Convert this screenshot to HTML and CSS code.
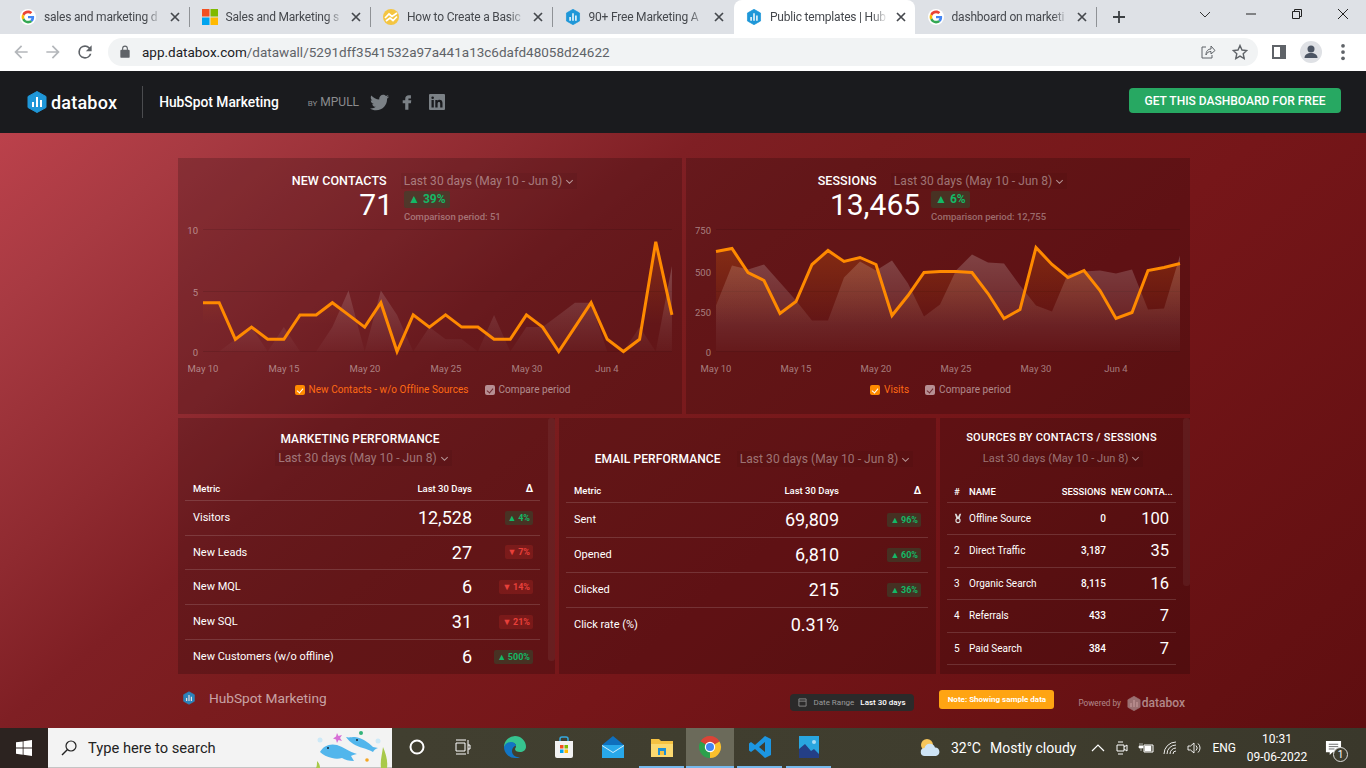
FILE: index.html
```html
<!DOCTYPE html>
<html lang="en">

<head>
    <meta charset="UTF-8">
    <meta name="viewport" content="width=device-width, initial-scale=1.0">
    <title>Public templates | HubSpot Marketing</title>
    <link rel="stylesheet" href="styles.css">
</head>

<body>
    <svg class="defs" width="0" height="0">
        <defs>
            <symbol id="dbx" viewBox="0 0 20 22">
                <path d="M10 .5l9 5v11l-9 5-9-5v-11z" fill="#1f97d8" stroke="#1f97d8" stroke-linejoin="round"/>
                <path d="M5 11h2v5H5zM9 6h2v10H9zM13 9h2v7h-2z" fill="#fff"/>
            </symbol>
            <symbol id="gg" viewBox="-6 -6 60 60">
                <circle cx="24" cy="24" r="30" fill="#fff"/>
                <path fill="#EA4335" d="M24 9.5c3.54 0 6.71 1.22 9.21 3.6l6.85-6.85C35.9 2.38 30.47 0 24 0 14.62 0 6.51 5.38 2.56 13.22l7.98 6.19C12.43 13.72 17.74 9.5 24 9.5z"/>
                <path fill="#4285F4" d="M46.98 24.55c0-1.57-.15-3.09-.38-4.55H24v9.02h12.94c-.58 2.96-2.26 5.48-4.78 7.18l7.73 6c4.51-4.18 7.09-10.36 7.09-17.65z"/>
                <path fill="#FBBC05" d="M10.53 28.59c-.48-1.45-.76-2.99-.76-4.59s.27-3.14.76-4.59l-7.98-6.19C.92 16.46 0 20.12 0 24c0 3.88.92 7.54 2.56 10.78l7.97-6.19z"/>
                <path fill="#34A853" d="M24 48c6.48 0 11.93-2.13 15.89-5.81l-7.73-6c-2.15 1.45-4.92 2.3-8.16 2.3-6.26 0-11.57-4.22-13.47-9.91l-7.98 6.19C6.51 42.62 14.62 48 24 48z"/>
            </symbol>
            <symbol id="closex" viewBox="0 0 10 10">
                <path d="M1 1l8 8M9 1l-8 8" stroke="#45484d" stroke-width="1.7" fill="none"/>
            </symbol>
            <!-- the plots are drawn in a flipped group, so these run bottom to top -->
            <linearGradient id="cmpFill" x1="0" y1="1" x2="0" y2="0">
                <stop offset="0" stop-color="#fff" stop-opacity=".2"/>
                <stop offset="1" stop-color="#fff" stop-opacity=".02"/>
            </linearGradient>
            <linearGradient id="lineFill" x1="0" y1="1" x2="0" y2="0">
                <stop offset="0" stop-color="#ff7a00" stop-opacity=".22"/>
                <stop offset=".75" stop-color="#ff7a00" stop-opacity="0"/>
            </linearGradient>
        </defs>
    </svg>

    <!-- chrome tabs -->
    <div class="tabstrip">
        <div class="tab">
            <svg class="fav" viewBox="0 0 16 16"><use href="#gg"/></svg>
            <span class="tab-title">sales and marketing d</span>
            <svg class="tab-x"><use href="#closex"/></svg>
        </div>
        <i class="tab-sep"></i>
        <div class="tab">
            <svg class="fav" viewBox="0 0 16 16">
                <path d="M0 0h7.5v7.5H0z" fill="#f25022"/><path d="M8.5 0H16v7.5H8.5z" fill="#7fba00"/>
                <path d="M0 8.5h7.5V16H0z" fill="#00a4ef"/><path d="M8.5 8.5H16V16H8.5z" fill="#ffb900"/>
            </svg>
            <span class="tab-title">Sales and Marketing s</span>
            <svg class="tab-x"><use href="#closex"/></svg>
        </div>
        <i class="tab-sep"></i>
        <div class="tab">
            <svg class="fav" viewBox="0 0 16 16">
                <circle cx="8" cy="8" r="8" fill="#f4c542"/>
                <path d="M2 9l4-4 3 2.5L14 4M3 12l4-3 3 2.5 4-4" stroke="#fff" stroke-width="1.7" fill="none"/>
            </svg>
            <span class="tab-title">How to Create a Basic</span>
            <svg class="tab-x"><use href="#closex"/></svg>
        </div>
        <i class="tab-sep"></i>
        <div class="tab">
            <svg class="fav"><use href="#dbx"/></svg>
            <span class="tab-title">90+ Free Marketing A</span>
            <svg class="tab-x"><use href="#closex"/></svg>
        </div>
        <i class="tab-sep off"></i>
        <div class="tab tab-active">
            <svg class="fav"><use href="#dbx"/></svg>
            <span class="tab-title">Public templates | Hub</span>
            <svg class="tab-x"><use href="#closex"/></svg>
        </div>
        <i class="tab-sep off"></i>
        <div class="tab">
            <svg class="fav" viewBox="0 0 16 16"><use href="#gg"/></svg>
            <span class="tab-title">dashboard on marketi</span>
            <svg class="tab-x"><use href="#closex"/></svg>
        </div>
        <i class="tab-sep"></i>
        <svg class="tab-plus" viewBox="0 0 14 14"><path d="M7 1v12M1 7h12" stroke="#3c4043" stroke-width="1.8"/></svg>
        <div class="win-ctrls">
            <svg viewBox="0 0 12 12"><path d="M1 4l5 5 5-5" stroke="#333" fill="none"/></svg>
            <svg viewBox="0 0 12 12"><path d="M1 6h10" stroke="#222"/></svg>
            <svg viewBox="0 0 12 12"><path d="M1.5 3.5h7v7h-7zM3.5 3.5v-2h7v7h-2" stroke="#222" fill="none"/></svg>
            <svg viewBox="0 0 12 12"><path d="M1 1l10 10M11 1L1 11" stroke="#222" fill="none"/></svg>
        </div>
    </div>

    <!-- address bar -->
    <div class="toolbar">
        <svg class="tool-btn" viewBox="0 0 24 24"><path d="M20 11H7.83l5.59-5.59L12 4l-8 8 8 8 1.41-1.41L7.83 13H20z" fill="#b4b7bb"/></svg>
        <svg class="tool-btn" viewBox="0 0 24 24"><path d="M4 11h12.17l-5.59-5.59L12 4l8 8-8 8-1.41-1.41L16.17 13H4z" fill="#b4b7bb"/></svg>
        <svg class="tool-btn" viewBox="0 0 24 24"><path d="M17.65 6.35A7.96 7.96 0 0 0 12 4a8 8 0 1 0 7.73 10h-2.08A6 6 0 1 1 12 6c1.66 0 3.14.69 4.22 1.78L13 11h7V4l-2.35 2.35z" fill="#5f6368"/></svg>
        <div class="omnibox">
            <svg class="lock" viewBox="0 0 24 24"><path d="M18 8h-1V6a5 5 0 0 0-10 0v2H6a2 2 0 0 0-2 2v10a2 2 0 0 0 2 2h12a2 2 0 0 0 2-2V10a2 2 0 0 0-2-2zm-2.9 0H8.900V6a3.100 3.100 0 0 1 6.200 0v2z" fill="#5f6368"/></svg>
            <span class="url"><b>app.databox.com</b>/datawall/5291dff3541532a97a441a13c6dafd48058d24622</span>
            <svg class="omni-ico" viewBox="0 0 16 16"><path d="M6 3H2v11h10v-3M6 11c0-4 2-6 5-6V2l4 4.500L11 10V7.500C8.500 7.500 7 8.500 6 11z" stroke="#5f6368" fill="none"/></svg>
            <svg class="omni-ico star" viewBox="0 0 16 16"><path d="M8 1.500l2 4.500 4.800.5-3.600 3.200 1 4.800L8 12.100l-4.200 2.400 1-4.800L1.200 6.500 6 6z" stroke="#5f6368" stroke-width="1.400" fill="none"/></svg>
        </div>
        <svg class="tool-btn side-btn" viewBox="0 0 16 16"><path d="M2 2h12v12H2z" fill="none" stroke="#5f6368" stroke-width="2"/><path d="M9 2h5v12H9z" fill="#5f6368"/></svg>
        <svg class="tool-btn avatar" viewBox="0 0 22 22"><circle cx="11" cy="11" r="11" fill="#dfe1e5"/><circle cx="11" cy="8" r="3.500" fill="#4c5563"/><path d="M4.500 17c0-3.500 3-5 6.500-5s6.500 1.500 6.500 5z" fill="#4c5563"/></svg>
        <svg class="tool-btn" viewBox="0 0 16 16"><circle cx="8" cy="3" r="1.500" fill="#5f6368"/><circle cx="8" cy="8" r="1.500" fill="#5f6368"/><circle cx="8" cy="13" r="1.500" fill="#5f6368"/></svg>
    </div>

    <!-- databox header -->
    <header class="app-head">
        <svg class="head-logo"><use href="#dbx"/></svg>
        <span class="wordmark">databox</span>
        <i class="head-div"></i>
        <span class="head-title">HubSpot Marketing</span>
        <span class="head-by"><small>BY</small> MPULL</span>
        <svg class="soc soc-tw" viewBox="0 0 24 24"><path d="M23.954 4.569c-.885.389-1.83.654-2.825.775 1.014-.611 1.794-1.574 2.163-2.723-.951.555-2.005.959-3.127 1.184-.896-.959-2.173-1.559-3.591-1.559-2.717 0-4.92 2.203-4.92 4.917 0 .39.045.765.127 1.124C7.691 8.094 4.066 6.13 1.64 3.161c-.427.722-.666 1.561-.666 2.475 0 1.71.87 3.213 2.188 4.096-.807-.026-1.566-.248-2.228-.616v.061c0 2.385 1.693 4.374 3.946 4.827-.413.111-.849.171-1.296.171-.314 0-.615-.03-.916-.086.631 1.953 2.445 3.377 4.604 3.417-1.68 1.319-3.809 2.105-6.102 2.105-.39 0-.779-.023-1.17-.067 2.189 1.394 4.768 2.209 7.557 2.209 9.054 0 13.999-7.496 13.999-13.986 0-.209 0-.42-.015-.63.961-.689 1.8-1.56 2.46-2.548l-.047-.02z"/></svg>
        <svg class="soc soc-fb" viewBox="0 3.500 14 21"><path d="M9 8.500h3.500V4H9.500C6.500 4 4.500 6 4.500 9v2H1v4h3.500v9h4.500v-9h3.500l.5-4H9V9.500c0-.6.200-1 0-1z"/></svg>
        <svg class="soc soc-in" viewBox="0 0 16 16"><path d="M1 0h14a1 1 0 0 1 1 1v14a1 1 0 0 1-1 1H1a1 1 0 0 1-1-1V1a1 1 0 0 1 1-1zm1.500 6v7.500h2.300V6zm1.150-3.500a1.300 1.300 0 1 0 0 2.600 1.300 1.300 0 0 0 0-2.600zM6.300 6v7.500h2.300V9.600c0-1 .500-1.700 1.400-1.700s1.200.7 1.200 1.700v3.900h2.300V9.100c0-2.100-1.100-3.300-2.900-3.300-1 0-1.700.5-2 1.100V6z" fill-rule="evenodd"/></svg>
        <a class="cta">GET THIS DASHBOARD FOR FREE</a>
    </header>

    <main class="wall">
        <div class="dash">
            <div class="dash-row">
                <section class="card">
                    <div class="chart-top">
                        <h3>NEW CONTACTS</h3>
                        <span class="range">Last 30 days (May 10 - Jun 8) <i class="chev"></i></span>
                    </div>
                    <div class="chart-kpi">
                        <span class="kpi-num">71</span>
                        <div class="kpi-side">
                            <span class="kpi-delta">▲ 39%</span>
                            <span class="kpi-cmp">Comparison period: 51</span>
                        </div>
                    </div>
                    <svg class="plot" viewBox="0 0 504 158">
                        <g class="grid">
                            <line x1="25" x2="494" y1="7.500" y2="7.500"/>
                            <line x1="25" x2="494" y1="69.500" y2="69.500"/>
                            <line x1="25" x2="494" y1="129.500" y2="129.500"/>
                        </g>
                        <g class="ylab">
                            <text x="20" y="12">10</text>
                            <text x="20" y="74">5</text>
                            <text x="20" y="134">0</text>
                        </g>
                        <g class="xlab">
                            <text x="25" y="150">May 10</text>
                            <text x="106" y="150">May 15</text>
                            <text x="187" y="150">May 20</text>
                            <text x="268" y="150">May 25</text>
                            <text x="349" y="150">May 30</text>
                            <text x="429" y="150">Jun 4</text>
                        </g>
                        <g transform="translate(25 129.500) scale(16.170 -12.200)">
                            <polygon fill="url(#cmpFill)" points="0,0 1,0 2,1 3,2 4,0 5,2 6,0 7,0 8,2 9,5 10,0 11,5 12,3 13,0 14,2 15,1 16,1 17,0 18,3 19,0 20,2 21,2 22,3 23,4 24,4 25,0 26,0 27,2 28,0 29,7 29,0"/>
                            <polygon fill="url(#lineFill)" points="0,0 0,4 1,4 2,1 3,2 4,1 5,1 6,3 7,3 8,4 9,3 10,2 11,4 12,0 13,3 14,2 15,3 16,2 17,2 18,1 19,1 20,3 21,2 22,0 23,2 24,4 25,1 26,0 27,1 28,9 29,3 29,0"/>
                            <polyline class="line" points="0,4 1,4 2,1 3,2 4,1 5,1 6,3 7,3 8,4 9,3 10,2 11,4 12,0 13,3 14,2 15,3 16,2 17,2 18,1 19,1 20,3 21,2 22,0 23,2 24,4 25,1 26,0 27,1 28,9 29,3"/>
                        </g>
                    </svg>
                    <div class="legend">
                        <span class="leg leg-on"><i class="tick"></i>New Contacts - w/o Offline Sources</span>
                        <span class="leg"><i class="tick"></i>Compare period</span>
                    </div>
                </section>

                <section class="card">
                    <div class="chart-top">
                        <h3>SESSIONS</h3>
                        <span class="range">Last 30 days (May 10 - Jun 8) <i class="chev"></i></span>
                    </div>
                    <div class="chart-kpi">
                        <span class="kpi-num">13,465</span>
                        <div class="kpi-side">
                            <span class="kpi-delta">▲ 6%</span>
                            <span class="kpi-cmp">Comparison period: 12,755</span>
                        </div>
                    </div>
                    <svg class="plot" viewBox="0 0 504 158">
                        <g class="grid">
                            <line x1="30" x2="494" y1="7.500" y2="7.500"/>
                            <line x1="30" x2="494" y1="69.500" y2="69.500"/>
                            <line x1="30" x2="494" y1="129.500" y2="129.500"/>
                        </g>
                        <g class="ylab">
                            <text x="25" y="12">750</text>
                            <text x="25" y="54">500</text>
                            <text x="25" y="94">250</text>
                            <text x="25" y="134">0</text>
                        </g>
                        <g class="xlab">
                            <text x="30" y="150">May 10</text>
                            <text x="110" y="150">May 15</text>
                            <text x="190" y="150">May 20</text>
                            <text x="270" y="150">May 25</text>
                            <text x="350" y="150">May 30</text>
                            <text x="430" y="150">Jun 4</text>
                        </g>
                        <g transform="translate(30 129.500) scale(16 -1)">
                            <polygon fill="url(#cmpFill)" points="0,0 0,46 1,86 2,82 3,87 4,69 5,51 6,31 7,31 8,74 9,90 10,81 11,91 12,68 13,35 14,47 15,81 16,97 17,89 18,88 19,66 20,46 21,40 22,78 23,80 24,81 25,78 26,82 27,42 28,43 29,96 29,0"/>
                            <polygon fill="url(#lineFill)" points="0,0 0,100 1,103 2,79 3,71 4,38 5,50 6,87 7,101 8,90 9,94 10,87 11,36 12,56 13,79 14,80 15,80 16,79 17,58 18,33 19,42 20,104 21,87 22,74 23,81 24,61 25,33 26,39 27,81 28,84 29,88 29,0"/>
                            <polyline class="line" points="0,100 1,103 2,79 3,71 4,38 5,50 6,87 7,101 8,90 9,94 10,87 11,36 12,56 13,79 14,80 15,80 16,79 17,58 18,33 19,42 20,104 21,87 22,74 23,81 24,61 25,33 26,39 27,81 28,84 29,88"/>
                        </g>
                    </svg>
                    <div class="legend">
                        <span class="leg leg-on"><i class="tick"></i>Visits</span>
                        <span class="leg"><i class="tick"></i>Compare period</span>
                    </div>
                </section>
            </div>

            <div class="dash-row dash-row-b">
                <section class="card card-mkt">
                    <h3>MARKETING PERFORMANCE</h3>
                    <span class="range">Last 30 days (May 10 - Jun 8) <i class="chev"></i></span>
                    <table class="metrics">
                        <tr><th>Metric</th><th class="num">Last 30 Days</th><th class="delta">Δ</th></tr>
                        <tr><td>Visitors</td><td class="num">12,528</td><td class="delta"><span class="up">▲ 4%</span></td></tr>
                        <tr class="short"><td>New Leads</td><td class="num">27</td><td class="delta"><span class="down">▼ 7%</span></td></tr>
                        <tr><td>New MQL</td><td class="num">6</td><td class="delta"><span class="down">▼ 14%</span></td></tr>
                        <tr><td>New SQL</td><td class="num">31</td><td class="delta"><span class="down">▼ 21%</span></td></tr>
                        <tr><td>New Customers (w/o offline)</td><td class="num">6</td><td class="delta"><span class="up">▲ 500%</span></td></tr>
                    </table>
                    <i class="scroll-thumb scroll-mkt"></i>
                </section>

                <section class="card card-email">
                    <div class="email-top">
                        <h3>EMAIL PERFORMANCE</h3>
                        <span class="range">Last 30 days (May 10 - Jun 8) <i class="chev"></i></span>
                    </div>
                    <table class="metrics">
                        <tr><th>Metric</th><th class="num">Last 30 Days</th><th class="delta">Δ</th></tr>
                        <tr><td>Sent</td><td class="num">69,809</td><td class="delta"><span class="up">▲ 96%</span></td></tr>
                        <tr><td>Opened</td><td class="num">6,810</td><td class="delta"><span class="up">▲ 60%</span></td></tr>
                        <tr><td>Clicked</td><td class="num">215</td><td class="delta"><span class="up">▲ 36%</span></td></tr>
                        <tr><td>Click rate (%)</td><td class="num">0.31%</td><td class="delta"></td></tr>
                    </table>
                </section>

                <section class="card card-src">
                    <h3>SOURCES BY CONTACTS / SESSIONS</h3>
                    <span class="range">Last 30 days (May 10 - Jun 8) <i class="chev"></i></span>
                    <table class="sources">
                        <tr><th class="rank">#</th><th>NAME</th><th class="sess">SESSIONS</th><th class="newc"><span class="clip">NEW CONTA...</span></th></tr>
                        <tr>
                            <td class="rank">
                                <svg class="medal" viewBox="0 0 10 12"><path d="M1 0h2l2 4 2-4h2L7 6H3z" fill="#ddd"/><circle cx="5" cy="8.500" r="2.600" fill="none" stroke="#ddd" stroke-width="1.400"/></svg>
                            </td>
                            <td>Offline Source</td><td class="sess">0</td><td class="newc">100</td>
                        </tr>
                        <tr><td class="rank">2</td><td>Direct Traffic</td><td class="sess">3,187</td><td class="newc">35</td></tr>
                        <tr><td class="rank">3</td><td>Organic Search</td><td class="sess">8,115</td><td class="newc">16</td></tr>
                        <tr><td class="rank">4</td><td>Referrals</td><td class="sess">433</td><td class="newc">7</td></tr>
                        <tr><td class="rank">5</td><td>Paid Search</td><td class="sess">384</td><td class="newc">7</td></tr>
                    </table>
                    <i class="scroll-thumb scroll-src"></i>
                </section>
            </div>

            <footer class="dash-foot">
                <svg class="foot-logo"><use href="#dbx"/></svg>
                <span class="foot-title">HubSpot Marketing</span>
                <span class="foot-range">
                    <svg viewBox="0 0 10 10"><path d="M1 1h8v8H1z" fill="none" stroke="#8d8d8d"/><path d="M1 3.500h8" stroke="#8d8d8d"/></svg>
                    <em>Date Range</em> <b>Last 30 days</b>
                </span>
                <span class="foot-note">Note: Showing sample data</span>
                <span class="foot-power">Powered by</span>
                <svg class="foot-mark"><use href="#dbx"/></svg>
                <span class="foot-brand">databox</span>
            </footer>
        </div>
    </main>

    <!-- windows taskbar -->
    <div class="taskbar">
        <div class="start">
            <svg viewBox="0 0 16 16"><path d="M0 2.300l6.700-.9v6.200H0zM7.500 1.300L16 0v7.600H7.500zM0 8.400h6.700v6.300L0 13.700zM7.500 8.400H16V16l-8.500-1.200z" fill="#fff"/></svg>
        </div>
        <div class="search">
            <svg class="search-ico" viewBox="0 0 16 16"><circle cx="10" cy="6" r="5" fill="none" stroke="#222" stroke-width="1.200"/><path d="M6.500 9.500L1 15" stroke="#222" stroke-width="1.400"/></svg>
            <span>Type here to search</span>
            <svg class="doodle" viewBox="0 0 74 40">
                <path d="M1 40c1-2 1-4 1-7 2 2 3 4 3 7zM66 40c-1-7 1-13 2-21 3 7 5 14 4 21z" fill="#a8c94a"/>
                <path d="M5 24c3-6 10-9 17-7 7 2 12 7 20 9-3 1-5 1-6 2l3 5c-5 0-9-1-12-3-3 1-7 1-10 0-5-1-9-3-12-6z" fill="#52b6ec"/>
                <path d="M31 9c3 1 5 0 9 0 7 1 13 5 18 10l5 1c-3 1-4 2-5 4-3-2-7-3-10-4-7-2-13-5-17-11z" fill="#52b6ec"/>
                <circle cx="13" cy="20" r="1" fill="#123"/><circle cx="42" cy="12" r="1" fill="#123"/>
                <path d="M22 5l1.500 3 3.500-1-2 3 2 3-3.500-1-1.500 3-1-3.500-3-1 3-2z" fill="#d76fd6"/>
                <circle cx="46" cy="5" r="2" fill="#33b37a"/><circle cx="52" cy="32" r="1.800" fill="#f5a623"/>
                <circle cx="5" cy="12" r="2.500" fill="#cde9f7"/><circle cx="63" cy="13" r="2.500" fill="#cde9f7"/>
            </svg>
        </div>
        <div class="task-app">
            <svg viewBox="0 0 16 16"><circle cx="8" cy="8" r="6.500" fill="none" stroke="#fff" stroke-width="2"/></svg>
        </div>
        <div class="task-app task-view">
            <svg viewBox="0 0 16 16"><path d="M1 1h10M1 15h10M1 4h9v8H1zM13 1v14M13 6h2v4h-2" fill="none" stroke="#fff"/></svg>
        </div>
        <div class="task-app">
            <svg class="big" viewBox="0 0 24 24">
                <path d="M12 1a11 11 0 0 1 11 11c0 3-3 5-6 5s-5-1-5-3c0-1 1-1 1-3S11 7 7 8c-3 1-5 4-6 4A11 11 0 0 1 12 1z" fill="#36c38f"/>
                <path d="M1 12c1-3 4-5 7-5 3 0 5 2 5 4-2 0-4 2-4 5 0 4 4 7 9 6-2 1-4 1-6 1A11 11 0 0 1 1 12z" fill="#1275c4"/>
            </svg>
        </div>
        <div class="task-app">
            <svg class="big" viewBox="0 0 24 24">
                <path d="M8 6V4a2 2 0 0 1 2-2h4a2 2 0 0 1 2 2v2" fill="none" stroke="#35a9df" stroke-width="1.500"/>
                <path d="M3 6h18v15a2 2 0 0 1-2 2H5a2 2 0 0 1-2-2z" fill="#f2f2f2"/>
                <path d="M8 10h3.500v3.500H8z" fill="#f25022"/><path d="M12.500 10H16v3.500h-3.500z" fill="#7fba00"/>
                <path d="M8 14.500h3.500V18H8z" fill="#00a4ef"/><path d="M12.500 14.500H16V18h-3.500z" fill="#ffb900"/>
            </svg>
        </div>
        <div class="task-app">
            <svg class="big" viewBox="0 0 24 24">
                <path d="M12 1l11 9v13H1V10z" fill="#0f6fbd"/>
                <path d="M1 10h22v13H1z" fill="#28a8ea"/>
                <path d="M1 10l11 7 11-7v1l-11 7-11-7z" fill="#d5eefc"/>
            </svg>
        </div>
        <div class="task-app task-open">
            <svg class="big" viewBox="0 0 24 24">
                <path d="M1 4h8l2 2h12v16H1z" fill="#f5c242"/>
                <path d="M1 9h22v13H1z" fill="#fbd970"/>
                <path d="M8 13h8v7H8z" fill="#1d8fd6"/><path d="M10 16h4v4h-4z" fill="#f5c242"/>
            </svg>
        </div>
        <div class="task-app task-open task-hot">
            <svg class="big" viewBox="0 0 24 24">
                <path d="M2.470 6.500A11 11 0 0 1 21.530 6.500L12 12z" fill="#db4437"/>
                <path d="M21.530 6.500A11 11 0 0 1 12 23L12 12z" fill="#fbc02d"/>
                <path d="M12 23A11 11 0 0 1 2.470 6.500L12 12z" fill="#2ca04c"/>
                <circle cx="12" cy="12" r="5.200" fill="#fff"/><circle cx="12" cy="12" r="4" fill="#4285f4"/>
            </svg>
        </div>
        <div class="task-app task-open">
            <svg class="big" viewBox="0 0 24 24">
                <path d="M17 1l6 3v16l-6 3L7 14l-4 3-2-1.500V8.500L3 7l4 3zM17 7l-6 5 6 5z" fill="#1c96e2" fill-rule="evenodd"/>
            </svg>
        </div>
        <div class="task-app task-open">
            <svg class="big" viewBox="0 0 24 24">
                <path d="M2 1h20v22H2z" fill="#29a6e0"/>
                <path d="M2 23V14l6-5 6 7 3-2 5 5v4z" fill="#243f86"/>
                <circle cx="17" cy="7" r="2" fill="#a8dcf5"/>
            </svg>
        </div>
        <div class="tray">
            <svg class="weather" viewBox="0 0 22 20">
                <circle cx="8" cy="7" r="6" fill="#f7c65b"/>
                <path d="M6 18a4 4 0 0 1-.5-8A5.500 5.500 0 0 1 16 9.500a4.300 4.300 0 0 1 1 8.500z" fill="#cfe4f5"/>
            </svg>
            <span class="temp">32°C</span>
            <span class="sky">Mostly cloudy</span>
            <svg class="tray-ico" viewBox="0 0 16 16"><path d="M2 11l6-6 6 6" fill="none" stroke="#fff" stroke-width="1.200"/></svg>
            <svg class="tray-ico" viewBox="0 0 16 16"><path d="M3 5h7v6H3zM10 7l3-2v6l-3-2M4 2h5M4 14h5" fill="none" stroke="#fff"/></svg>
            <svg class="tray-ico" viewBox="0 0 16 16"><path d="M6 5h9v7H6z" fill="none" stroke="#fff"/><path d="M7 6h6v5H7zM1 6h4v2H1zM2 3v3M4 3v3M3 8v3" fill="#fff" stroke="#fff" stroke-width=".6"/></svg>
            <svg class="tray-ico" viewBox="0 0 16 16"><path d="M2 14a12 12 0 0 1 12-12M5 14a9 9 0 0 1 9-9M8 14a6 6 0 0 1 6-6M11 14a3 3 0 0 1 3-3" fill="none" stroke="#fff" stroke-width=".9"/></svg>
            <svg class="tray-ico" viewBox="0 0 16 16"><path d="M2 6h2.500L8 3v10L4.500 10H2zM10 5.500a3.500 3.500 0 0 1 0 5M12 3.500a6 6 0 0 1 0 9" fill="none" stroke="#fff" stroke-width=".9"/></svg>
            <span class="lang">ENG</span>
            <span class="clock"><span>10:31</span><span>09-06-2022</span></span>
            <div class="notif">
                <svg viewBox="0 0 18 18"><path d="M1 1h16v12H8l-3 3v-3H1z" fill="#fff"/><path d="M4 4.500h10M4 7h10M4 9.500h6" stroke="#555" stroke-width=".9"/></svg>
                <b>1</b>
            </div>
        </div>
    </div>
</body>

</html>
```

FILE: styles.css
```css
/* styles.css */
* {
    box-sizing: border-box;
}

body {
    margin: 0;
    width: 1366px;
    height: 768px;
    overflow: hidden;
    display: flex;
    flex-direction: column;
    font-family: Roboto, "Liberation Sans", sans-serif;
}

.defs {
    position: absolute;
}

/* browser */
.tabstrip {
    height: 34px;
    flex: none;
    display: flex;
    align-items: center;
    padding-left: 8px;
    background: #dee1e6;
}

.tab {
    width: 180.5px;
    height: 34px;
    display: flex;
    align-items: center;
    padding: 0 8px 0 12px;
    font-size: 12px;
    letter-spacing: -.2px;
    color: #45484d;
}

.tab-active {
    background: #fff;
    border-radius: 8px 8px 0 0;
}

.fav {
    width: 16px;
    height: 16px;
    flex: none;
}

.tab-title {
    flex: 1;
    min-width: 0;
    margin-left: 8px;
    white-space: nowrap;
    -webkit-mask-image: linear-gradient(90deg, #000 86%, transparent 100%);
    mask-image: linear-gradient(90deg, #000 86%, transparent 100%);
}

.tab-x {
    width: 10px;
    height: 10px;
    flex: none;
    margin: 0 1px 0 8px;
}

.tab-sep {
    width: 1px;
    height: 20px;
    flex: none;
    background: #8f9296;
}

.tab-sep.off {
    background: none;
}

.tab-plus {
    width: 14px;
    height: 14px;
    margin-left: 15px;
}

.win-ctrls {
    margin-left: auto;
    display: flex;
    align-items: center;
}

.win-ctrls svg {
    width: 46px;
    height: 12px;
    margin-top: -6px;
}

.toolbar {
    height: 37px;
    flex: none;
    display: flex;
    align-items: center;
    padding: 0 7px 1px 5px;
    background: #fff;
}

.tool-btn {
    width: 32px;
    height: 20px;
    flex: none;
}

.omnibox {
    flex: 1;
    height: 28px;
    margin: 0 5px 0 7px;
    padding: 0 10px;
    display: flex;
    align-items: center;
    border-radius: 14px;
    background: #f1f3f4;
}

.lock {
    width: 14px;
    height: 14px;
    flex: none;
}

.url {
    margin-left: 10px;
    font-size: 13.5px;
    color: #5f6368;
}

.url b {
    font-weight: 400;
    color: #202124;
}

.omni-ico {
    width: 16px;
    height: 16px;
    margin-left: auto;
}

.omni-ico.star {
    margin-left: 16px;
}

.side-btn {
    height: 16px;
}

.avatar {
    height: 22px;
}

/* databox header */
.app-head {
    height: 62px;
    flex: none;
    display: flex;
    align-items: center;
    padding-left: 27px;
    background: #1a1b1e;
    color: #fff;
}

.head-logo {
    width: 20px;
    height: 22px;
}

.wordmark {
    margin-left: 4px;
    font-size: 18px;
    font-weight: 500;
    letter-spacing: .2px;
}

.head-div {
    width: 1px;
    height: 32px;
    margin-left: 25px;
    background: #4b4c4f;
}

.head-title {
    margin-left: 16px;
    font-size: 13.8px;
    font-weight: 500;
}

.head-by {
    margin-left: 29px;
    font-size: 12px;
    color: #8b8c8e;
}

.head-by small {
    font-size: 8px;
}

.soc {
    fill: #7b8186;
    flex: none;
}

.soc-tw {
    width: 19px;
    height: 19px;
    margin-left: 11px;
}

.soc-fb {
    width: 10px;
    height: 15px;
    margin: 1px 0 0 13px;
}

.soc-in {
    width: 16px;
    height: 16px;
    margin-left: 17px;
}

.cta {
    margin: -4px 25px 0 auto;
    width: 212px;
    height: 25px;
    line-height: 26px;
    text-align: center;
    border-radius: 4px;
    background: #27a862;
    font-size: 12px;
    font-weight: 500;
}

/* dashboard */
.wall {
    flex: 1;
    min-height: 0;
    background: linear-gradient(140deg, #bb414b 0, #a83a42 10%, #8f2a30 25%, #7f1f24 34%, #7a1c1e 43%, #761619 61%, #641012 91%, #5f0e10 100%);
    color: #fff;
}

.dash {
    width: 1012px;
    margin: 25px 0 0 178px;
}

.dash-row {
    height: 256px;
    display: grid;
    grid-template-columns: 504px 504px;
    gap: 4px;
}

.dash-row-b {
    margin-top: 4px;
    grid-template-columns: 377px 377px 250px;
}

.card {
    position: relative;
    overflow: hidden;
    background: rgba(0, 0, 0, .19);
    display: flex;
    flex-direction: column;
}

h3 {
    margin: 0;
    font-size: 12px;
    font-weight: 500;
    line-height: 16px;
    letter-spacing: .1px;
}

.range {
    font-size: 12px;
    line-height: 16px;
    letter-spacing: .06px;
    color: rgba(255, 255, 255, .42);
    white-space: nowrap;
    background: rgba(0, 0, 0, .05);
    padding: 0 3px;
}

.chev {
    display: inline-block;
    width: 5px;
    height: 5px;
    margin: 0 2px 2px 2px;
    border-right: 1.5px solid rgba(255, 255, 255, .55);
    border-bottom: 1.5px solid rgba(255, 255, 255, .55);
    transform: rotate(45deg);
}

.chart-top {
    display: flex;
    justify-content: center;
    align-items: center;
    gap: 14px;
    padding: 15px 0 0 9px;
}

.chart-top h3 {
    font-size: 12.5px;
}

.chart-kpi {
    display: flex;
    justify-content: center;
    gap: 11px;
    height: 33px;
}

.kpi-num {
    font-size: 30px;
    line-height: 30px;
    margin-top: 1px;
}

.kpi-side {
    display: flex;
    flex-direction: column;
    align-items: flex-start;
    padding-top: 2px;
}

.kpi-delta {
    height: 17px;
    line-height: 17px;
    padding: 0 4px;
    border-radius: 2px;
    background: rgba(55, 70, 45, .6);
    color: #14b866;
    font-size: 12px;
    font-weight: 700;
}

.kpi-cmp {
    margin-top: 3px;
    font-size: 9.5px;
    line-height: 12px;
    font-weight: 500;
    color: rgba(255, 255, 255, .38);
}

.plot {
    width: 504px;
    height: 158px;
    flex: none;
}

.grid line {
    stroke: rgba(0, 0, 0, .1);
}

.ylab text,
.xlab text {
    font-size: 9.5px;
    fill: rgba(255, 255, 255, .45);
}

.ylab text {
    text-anchor: end;
}

.xlab text {
    text-anchor: middle;
}

.line {
    fill: none;
    stroke: #ff8a00;
    stroke-width: 3;
    vector-effect: non-scaling-stroke;
}

.legend {
    display: flex;
    justify-content: center;
    gap: 16px;
    margin-top: 1px;
    padding-left: 5px;
    font-size: 10px;
    line-height: 18px;
    color: rgba(255, 255, 255, .5);
}

.leg {
    display: flex;
    align-items: center;
    letter-spacing: .05px;
}

.tick {
    position: relative;
    width: 10px;
    height: 10px;
    margin-right: 4px;
    border-radius: 2px;
    background: #b78f93;
}

.tick::after {
    content: "";
    position: absolute;
    left: 3px;
    top: 1.5px;
    width: 3px;
    height: 5px;
    border-right: 1px solid #6d2a30;
    border-bottom: 1px solid #6d2a30;
    transform: rotate(40deg);
}

.leg-on {
    color: #ff6a13;
}

.leg-on .tick {
    background: #ff8a00;
}

.leg-on .tick::after {
    border-color: #fff;
}

/* tables */
.card-mkt,
.card-src {
    align-items: center;
    text-align: center;
}

.card-mkt {
    padding: 13px 13px 0 0;
}

.card-mkt .range {
    margin: 3px 0 0 7px;
}

.metrics {
    border-collapse: collapse;
    table-layout: fixed;
    margin-left: 7px;
    font-size: 11px;
    text-align: left;
}

.card-mkt .metrics {
    width: 355px;
    flex: none;
    align-self: flex-start;
    margin-top: 11px;
}

.metrics th {
    height: 23px;
    padding: 1px 0 0 8px;
    font-size: 9.5px;
    font-weight: 500;
    border-bottom: 1px solid rgba(255, 255, 255, .14);
}

.metrics td {
    height: 35px;
    padding: 0 0 0 8px;
    border-top: 1px solid rgba(255, 255, 255, .14);
}

.metrics .short td {
    height: 34px;
}

.metrics tr:nth-child(2) td {
    border-top: 0;
}

.metrics .num {
    width: 130px;
    padding-left: 0;
    text-align: right;
}

.metrics td.num {
    font-size: 18px;
}

.metrics .delta {
    width: 68px;
    padding: 0 7px 0 0;
    text-align: right;
}

.metrics th.delta {
    font-size: 10px;
    font-weight: 700;
}

.up,
.down {
    display: inline-block;
    height: 14px;
    line-height: 14px;
    padding: 0 3px;
    border-radius: 2px;
    font-size: 9px;
    font-weight: 700;
    word-spacing: -.5px;
}

.up {
    background: rgba(55, 70, 45, .6);
    color: #14b866;
}

.down {
    background: rgba(255, 60, 50, .16);
    color: #e8403a;
}

.email-top {
    display: flex;
    justify-content: center;
    align-items: center;
    gap: 16px;
    padding: 33px 0 0 13px;
}

.card-email .metrics {
    width: 362px;
    margin-top: 12px;
}

.card-email .metrics .delta {
    width: 89px;
}

.card-src {
    padding: 12px 7px 0 0;
}

.card-src h3 {
    font-size: 11px;
    letter-spacing: .2px;
}

.card-src .range {
    margin-top: 5px;
    font-size: 11px;
}

.sources {
    width: 229px;
    flex: none;
    align-self: flex-start;
    margin: 14px 0 0 7px;
    border-collapse: collapse;
    table-layout: fixed;
    font-size: 10px;
    text-align: left;
}

.sources th {
    height: 21px;
    padding: 0;
    font-size: 9.5px;
    font-weight: 500;
    border-bottom: 1px solid rgba(255, 255, 255, .14);
}

.sources td {
    height: 32.5px;
    padding: 0;
    border-top: 1px solid rgba(255, 255, 255, .14);
}

.sources tr:nth-child(2) td {
    border-top: 0;
}

.sources tr:last-child td {
    border-bottom: 1px solid rgba(255, 255, 255, .14);
}

.sources .rank {
    width: 22px;
    padding-left: 7px;
}

.sources .sess {
    width: 64px;
    text-align: right;
    font-weight: 500;
}

.sources .newc {
    width: 70px;
    padding: 0 7px 0 5px;
    text-align: right;
}

.sources td.newc {
    font-size: 16.5px;
}

.clip {
    display: block;
    white-space: nowrap;
}

.medal {
    width: 8px;
    height: 11px;
    vertical-align: middle;
}

.scroll-thumb {
    position: absolute;
    right: 0;
    top: 0;
    width: 7px;
    border-radius: 3px;
    background: rgba(255, 255, 255, .05);
}

.scroll-mkt {
    height: 243px;
}

.scroll-src {
    height: 168px;
}

/* dashboard footer */
.dash-foot {
    height: 54px;
    display: flex;
    align-items: center;
    padding: 0 5px;
}

.foot-logo {
    width: 12px;
    height: 14px;
    margin-top: -6px;
    opacity: .85;
}

.foot-title {
    margin: -6px 0 0 14px;
    font-size: 13.7px;
    color: rgba(255, 255, 255, .6);
}

.foot-range {
    margin: 3px 0 0 auto;
    height: 17px;
    width: 124px;
    display: flex;
    align-items: center;
    padding-left: 8px;
    border-radius: 4px;
    background: #2b2a2a;
    font-size: 8px;
    white-space: nowrap;
}

.foot-range svg {
    width: 9px;
    height: 9px;
    margin-right: 6px;
}

.foot-range em {
    font-style: normal;
    color: #9a9a9a;
    margin-right: 6px;
}

.foot-range b {
    font-weight: 500;
}

.foot-note {
    margin: -4px 0 0 25px;
    width: 115px;
    height: 19px;
    line-height: 19px;
    text-align: center;
    border-radius: 3px;
    background: #ffa412;
    font-size: 8px;
    font-weight: 700;
    white-space: nowrap;
}

.foot-power {
    margin: 4px 0 0 24px;
    font-size: 8.2px;
    color: rgba(255, 255, 255, .5);
}

.foot-mark {
    width: 14px;
    height: 15px;
    margin: 4px 1px 0 6px;
    opacity: .5;
    filter: grayscale(1) brightness(1.6);
}

.foot-brand {
    margin-top: 4px;
    font-size: 12px;
    font-weight: 500;
    color: rgba(255, 255, 255, .5);
}

/* taskbar */
.taskbar {
    height: 40px;
    flex: none;
    display: flex;
    align-items: stretch;
    background: linear-gradient(90deg, #2c2320 0, #2c2320 48px, #413f30 392px, #3f3d2e 1000px, #3a382b 100%);
    color: #fff;
}

.start {
    width: 48px;
    display: flex;
    align-items: center;
    justify-content: center;
}

.start svg {
    width: 16px;
    height: 16px;
}

.search {
    position: relative;
    width: 344px;
    display: flex;
    align-items: center;
    padding: 1px 0 0 13px;
    background: #f3f3f3;
    border-bottom: 1px solid #c4c4c4;
    color: #222;
    font-size: 14.7px;
}

.search-ico {
    width: 16px;
    height: 16px;
    margin-right: 11px;
}

.doodle {
    width: 74px;
    height: 40px;
    margin-left: auto;
    margin-right: 3px;
}

.task-app {
    width: 45px;
    margin: 0 2px;
    display: flex;
    align-items: center;
    justify-content: center;
    border-bottom: 2px solid transparent;
}

.task-app svg {
    width: 16px;
    height: 16px;
}

.task-app svg.big {
    width: 24px;
    height: 24px;
}

.task-view svg {
    margin-right: 5px;
}

.task-open {
    border-bottom-color: #76b9ed;
}

.task-hot {
    width: 48px;
    margin: 0 1px 0 0;
    background: #6b6a5a;
}

.tray {
    margin-left: auto;
    padding-right: 10px;
    display: flex;
    align-items: center;
    font-size: 14px;
}

.weather {
    width: 22px;
    height: 20px;
}

.temp {
    margin-left: 10px;
}

.sky {
    margin-left: 9px;
    margin-right: 10px;
}

.tray-ico {
    width: 24px;
    height: 16px;
}

.lang {
    margin-left: 6px;
    font-size: 12px;
}

.clock {
    width: 66px;
    margin-left: 8px;
    display: flex;
    flex-direction: column;
    align-items: center;
    gap: 4px;
    font-size: 12px;
    line-height: 14px;
}

.notif {
    position: relative;
    width: 46px;
    display: flex;
    justify-content: center;
}

.notif svg {
    width: 17px;
    height: 17px;
}

.notif b {
    position: absolute;
    right: 8px;
    top: 7px;
    width: 15px;
    height: 15px;
    border-radius: 50%;
    border: 1px solid #ddd;
    background: #3f3d2e;
    font-size: 10px;
    font-weight: 400;
    line-height: 13px;
    text-align: center;
}
```
